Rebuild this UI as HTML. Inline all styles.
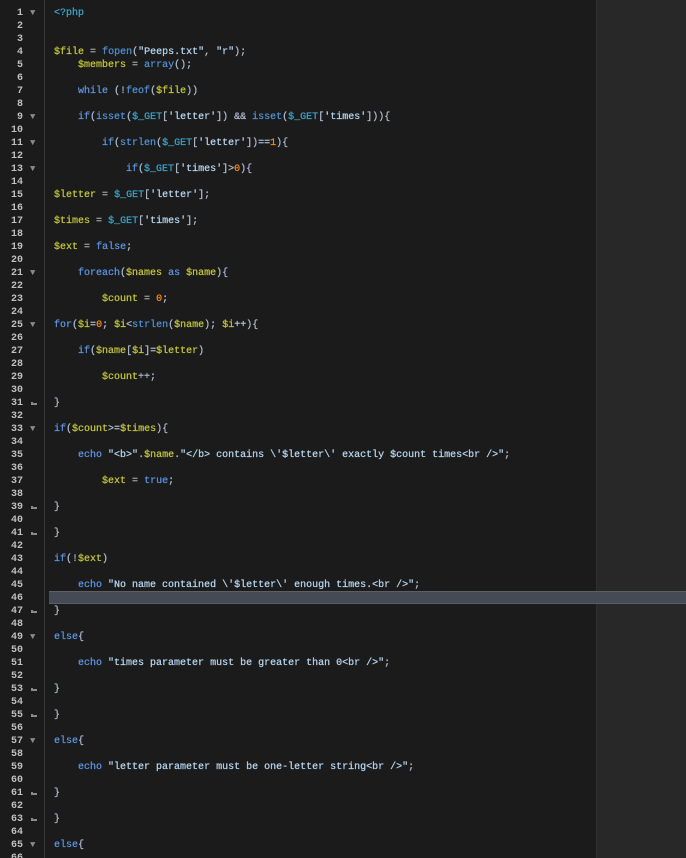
<!DOCTYPE html>
<html><head><meta charset="utf-8"><style>
html,body{margin:0;padding:0;background:#1b1b1b;width:686px;height:858px;overflow:hidden;position:relative}
.r{position:absolute;left:596px;top:0;width:90px;height:858px;background:#282828;border-left:1px solid #303030}
.gl{position:absolute;left:44px;top:0;width:1px;height:858px;background:#3a3a3a}
.hl{position:absolute;left:49px;top:591px;width:637px;height:13px;background:#454a55;border-top:1px solid #5a5f68;border-bottom:1px solid #5a5f68;box-sizing:border-box}
.c{position:absolute;top:7px;left:0;width:686px;height:851px;overflow:hidden;font:10px/13px "Liberation Mono",monospace;color:#aebbd0}
.l{height:13px;position:relative}
.ln{position:absolute;left:0;width:23px;text-align:right;color:#c0c0c0;font-weight:bold}
.fd{position:absolute;left:30px;top:0;color:#8a8a8a;font-size:9px}
.fe{position:absolute;left:31px;top:5px;width:6px;height:3px;border-left:2px solid #8a8a8a;border-bottom:2px solid #8a8a8a;box-sizing:border-box}
.t{position:absolute;left:54px;white-space:pre;-webkit-text-stroke:0.25px currentColor}
.k{color:#5a93e0}.f{color:#4f8fd4}.g{color:#3aa3c8}.v{color:#c2c43a}.s{color:#b4d4ee}.n{color:#ff8a1c}.p{color:#a0a0a0}
</style></head><body>
<div class="r"></div><div class="gl"></div><div class="hl"></div>
<div class="c">
<div class="l"><span class="ln">1</span><span class="fd">▼</span><span class="t"><span class="g">&lt;?php</span></span></div>
<div class="l"><span class="ln">2</span></div>
<div class="l"><span class="ln">3</span></div>
<div class="l"><span class="ln">4</span><span class="t"><span class="v">$file</span> <span class="p">=</span> <span class="f">fopen</span>(<span class="s">"Peeps.txt"</span>, <span class="s">"r"</span>);</span></div>
<div class="l"><span class="ln">5</span><span class="t">    <span class="v">$members</span> <span class="p">=</span> <span class="f">array</span>();</span></div>
<div class="l"><span class="ln">6</span></div>
<div class="l"><span class="ln">7</span><span class="t">    <span class="k">while</span> (!<span class="f">feof</span>(<span class="v">$file</span>))</span></div>
<div class="l"><span class="ln">8</span></div>
<div class="l"><span class="ln">9</span><span class="fd">▼</span><span class="t">    <span class="k">if</span>(<span class="f">isset</span>(<span class="g">$_GET</span>[<span class="s">'letter'</span>]) &amp;&amp; <span class="f">isset</span>(<span class="g">$_GET</span>[<span class="s">'times'</span>])){</span></div>
<div class="l"><span class="ln">10</span></div>
<div class="l"><span class="ln">11</span><span class="fd">▼</span><span class="t">        <span class="k">if</span>(<span class="f">strlen</span>(<span class="g">$_GET</span>[<span class="s">'letter'</span>])==<span class="n">1</span>){</span></div>
<div class="l"><span class="ln">12</span></div>
<div class="l"><span class="ln">13</span><span class="fd">▼</span><span class="t">            <span class="k">if</span>(<span class="g">$_GET</span>[<span class="s">'times'</span>]&gt;<span class="n">0</span>){</span></div>
<div class="l"><span class="ln">14</span></div>
<div class="l"><span class="ln">15</span><span class="t"><span class="v">$letter</span> <span class="p">=</span> <span class="g">$_GET</span>[<span class="s">'letter'</span>];</span></div>
<div class="l"><span class="ln">16</span></div>
<div class="l"><span class="ln">17</span><span class="t"><span class="v">$times</span> <span class="p">=</span> <span class="g">$_GET</span>[<span class="s">'times'</span>];</span></div>
<div class="l"><span class="ln">18</span></div>
<div class="l"><span class="ln">19</span><span class="t"><span class="v">$ext</span> <span class="p">=</span> <span class="k">false</span>;</span></div>
<div class="l"><span class="ln">20</span></div>
<div class="l"><span class="ln">21</span><span class="fd">▼</span><span class="t">    <span class="k">foreach</span>(<span class="v">$names</span> <span class="k">as</span> <span class="v">$name</span>){</span></div>
<div class="l"><span class="ln">22</span></div>
<div class="l"><span class="ln">23</span><span class="t">        <span class="v">$count</span> <span class="p">=</span> <span class="n">0</span>;</span></div>
<div class="l"><span class="ln">24</span></div>
<div class="l"><span class="ln">25</span><span class="fd">▼</span><span class="t"><span class="k">for</span>(<span class="v">$i</span>=<span class="n">0</span>; <span class="v">$i</span>&lt;<span class="f">strlen</span>(<span class="v">$name</span>); <span class="v">$i</span>++){</span></div>
<div class="l"><span class="ln">26</span></div>
<div class="l"><span class="ln">27</span><span class="t">    <span class="k">if</span>(<span class="v">$name</span>[<span class="v">$i</span>]=<span class="v">$letter</span>)</span></div>
<div class="l"><span class="ln">28</span></div>
<div class="l"><span class="ln">29</span><span class="t">        <span class="v">$count</span>++;</span></div>
<div class="l"><span class="ln">30</span></div>
<div class="l"><span class="ln">31</span><span class="fe"></span><span class="t">}</span></div>
<div class="l"><span class="ln">32</span></div>
<div class="l"><span class="ln">33</span><span class="fd">▼</span><span class="t"><span class="k">if</span>(<span class="v">$count</span>&gt;=<span class="v">$times</span>){</span></div>
<div class="l"><span class="ln">34</span></div>
<div class="l"><span class="ln">35</span><span class="t">    <span class="k">echo</span> <span class="s">"&lt;b&gt;"</span>.<span class="v">$name</span>.<span class="s">"&lt;/b&gt; contains \'$letter\' exactly $count times&lt;br /&gt;"</span>;</span></div>
<div class="l"><span class="ln">36</span></div>
<div class="l"><span class="ln">37</span><span class="t">        <span class="v">$ext</span> <span class="p">=</span> <span class="k">true</span>;</span></div>
<div class="l"><span class="ln">38</span></div>
<div class="l"><span class="ln">39</span><span class="fe"></span><span class="t">}</span></div>
<div class="l"><span class="ln">40</span></div>
<div class="l"><span class="ln">41</span><span class="fe"></span><span class="t">}</span></div>
<div class="l"><span class="ln">42</span></div>
<div class="l"><span class="ln">43</span><span class="t"><span class="k">if</span>(!<span class="v">$ext</span>)</span></div>
<div class="l"><span class="ln">44</span></div>
<div class="l"><span class="ln">45</span><span class="t">    <span class="k">echo</span> <span class="s">"No name contained \'$letter\' enough times.&lt;br /&gt;"</span>;</span></div>
<div class="l"><span class="ln">46</span></div>
<div class="l"><span class="ln">47</span><span class="fe"></span><span class="t">}</span></div>
<div class="l"><span class="ln">48</span></div>
<div class="l"><span class="ln">49</span><span class="fd">▼</span><span class="t"><span class="k">else</span>{</span></div>
<div class="l"><span class="ln">50</span></div>
<div class="l"><span class="ln">51</span><span class="t">    <span class="k">echo</span> <span class="s">"times parameter must be greater than 0&lt;br /&gt;"</span>;</span></div>
<div class="l"><span class="ln">52</span></div>
<div class="l"><span class="ln">53</span><span class="fe"></span><span class="t">}</span></div>
<div class="l"><span class="ln">54</span></div>
<div class="l"><span class="ln">55</span><span class="fe"></span><span class="t">}</span></div>
<div class="l"><span class="ln">56</span></div>
<div class="l"><span class="ln">57</span><span class="fd">▼</span><span class="t"><span class="k">else</span>{</span></div>
<div class="l"><span class="ln">58</span></div>
<div class="l"><span class="ln">59</span><span class="t">    <span class="k">echo</span> <span class="s">"letter parameter must be one-letter string&lt;br /&gt;"</span>;</span></div>
<div class="l"><span class="ln">60</span></div>
<div class="l"><span class="ln">61</span><span class="fe"></span><span class="t">}</span></div>
<div class="l"><span class="ln">62</span></div>
<div class="l"><span class="ln">63</span><span class="fe"></span><span class="t">}</span></div>
<div class="l"><span class="ln">64</span></div>
<div class="l"><span class="ln">65</span><span class="fd">▼</span><span class="t"><span class="k">else</span>{</span></div>
<div class="l"><span class="ln">66</span></div>
</div>
</body></html>
